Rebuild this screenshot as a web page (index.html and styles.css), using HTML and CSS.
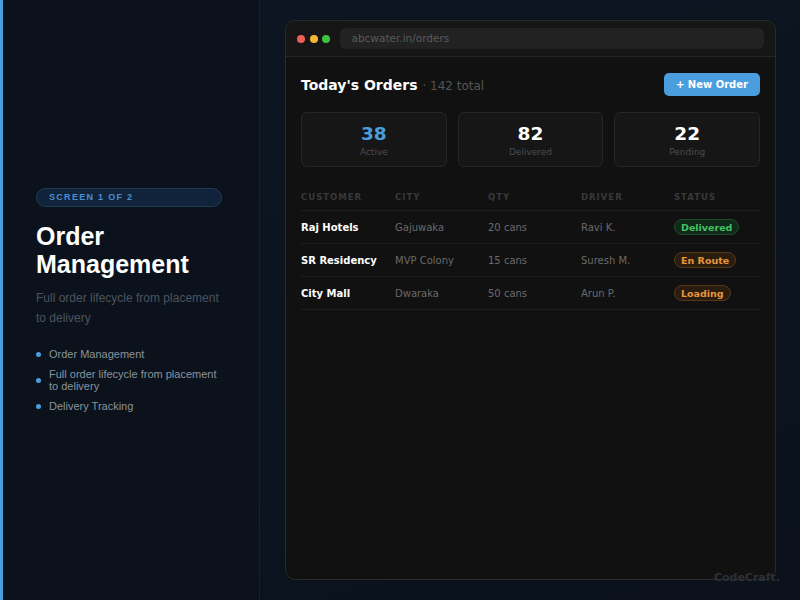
FILE: index.html
```html
<!DOCTYPE html>
<html lang="en">
<head>
  <meta charset="UTF-8" />
  <title>Order Management</title>
  <link rel="stylesheet" href="styles.css">
</head>
<body>
<div class="page">
  <aside class="side">
    <div class="pill">SCREEN 1 OF 2</div>
    <h1>Order Management</h1>
    <p class="lead">Full order lifecycle from placement to delivery</p>
    <ul class="points">
      <li>Order Management</li>
      <li>Full order lifecycle from placement to delivery</li>
      <li>Delivery Tracking</li>
    </ul>
  </aside>

  <main class="stage">
    <div class="window">
      <div class="titlebar">
        <span class="dot red"></span>
        <span class="dot yellow"></span>
        <span class="dot green"></span>
        <div class="url">abcwater.in/orders</div>
      </div>
      <div class="app">
        <div class="app-hdr">
          <div class="title">Today's Orders <span class="total">· 142 total</span></div>
          <button class="btn-new">+ New Order</button>
        </div>
        <div class="stats">
          <div class="stat"><div class="num blue">38</div><div class="lbl">Active</div></div>
          <div class="stat"><div class="num">82</div><div class="lbl">Delivered</div></div>
          <div class="stat"><div class="num">22</div><div class="lbl">Pending</div></div>
        </div>
        <div class="table">
          <div class="row head">
            <span>CUSTOMER</span><span>CITY</span><span>QTY</span><span>DRIVER</span><span>STATUS</span>
          </div>
          <div class="row">
            <span class="cust">Raj Hotels</span><span>Gajuwaka</span><span>20 cans</span><span>Ravi K.</span>
            <span><em class="badge ok">Delivered</em></span>
          </div>
          <div class="row">
            <span class="cust">SR Residency</span><span>MVP Colony</span><span>15 cans</span><span>Suresh M.</span>
            <span><em class="badge warn">En Route</em></span>
          </div>
          <div class="row">
            <span class="cust">City Mall</span><span>Dwaraka</span><span>50 cans</span><span>Arun P.</span>
            <span><em class="badge warn">Loading</em></span>
          </div>
        </div>
      </div>
    </div>
    <div class="mark">CodeCraft.</div>
  </main>
</div>
</body>
</html>
```

FILE: styles.css
```css
html,body{margin:0;height:100%}
body{background:#0c131d;font-family:"Liberation Sans",Arial,sans-serif;overflow:hidden}
.page{display:flex;height:600px}

.side{
  width:260px;flex:none;box-sizing:border-box;
  padding:188px 37px 0 33px;
  border-left:3px solid #4a9ede;
  border-right:1px solid #18202b;
  background:#0b121b;
}
.pill{
  border:1px solid #1f3a57;background:#10233a;border-radius:10px;
  color:#4a8fd0;font-size:9px;font-weight:bold;letter-spacing:1.3px;
  padding:5px 12px;line-height:7px;
}
.side h1{color:#fff;font-size:25px;line-height:28px;margin:15px 0 10px}
.lead{color:#4b535f;font-size:12px;line-height:20px;margin:0 0 20px}
.points{list-style:none;margin:0;padding:0}
.points li{position:relative;padding-left:13px;color:#8a939e;font-size:11px;line-height:12px;margin-bottom:8px}
.points li::before{content:"";position:absolute;left:0;top:50%;margin-top:-2px;width:5px;height:5px;border-radius:50%;background:#4a9ede}

.stage{flex:1;position:relative;padding:20px 24px 20px 25px;background:linear-gradient(160deg,#0c1521 0%,#0b121c 100%)}
.window{
  height:100%;box-sizing:border-box;
  background:#111111;border:1px solid #2a2a2a;border-radius:10px;overflow:hidden;
  font-family:"DejaVu Sans",sans-serif;
}
.titlebar{display:flex;align-items:center;gap:4.5px;height:35px;padding:0 11px;border-bottom:1px solid #252525;background:#161616}
.dot{width:8px;height:8px;border-radius:50%}
.red{background:#ee5f57}.yellow{background:#f3b833}.green{background:#3ec23f}
.url{flex:1;margin-left:5px;height:21px;background:#222;border-radius:6px;color:#5a5a5a;font-size:10.5px;line-height:21px;padding-left:12px}

.app{padding:16px 15px}
.app-hdr{display:flex;justify-content:space-between;align-items:center}
.title{color:#fff;font-weight:bold;font-size:14px}
.total{color:#555;font-weight:normal;font-size:12px}
.btn-new{background:#4a9ede;color:#fff;border:none;border-radius:5px;font-family:inherit;font-weight:bold;font-size:10px;height:23px;padding:0 12px}

.stats{display:grid;grid-template-columns:repeat(3,1fr);gap:11px;margin-top:16px}
.stat{background:#161616;border:1px solid #262626;border-radius:6px;height:55px;text-align:center;box-sizing:border-box;padding-top:10px}
.num{color:#fff;font-weight:bold;font-size:18.5px;line-height:21px}
.num.blue{color:#4a9ede}
.lbl{color:#4c4c4c;font-size:9px;margin-top:3px}

.table{margin-top:22px}
.row{display:grid;grid-template-columns:94px 93px 93px 93px 1fr;height:33px;box-sizing:border-box;align-items:center;border-bottom:1px solid #1d1d1d;font-size:10px;color:#6a6a6a}
.row.head{height:22px;align-items:start;color:#393939;font-weight:bold;font-size:8.5px;letter-spacing:1px;padding-top:3px}
.cust{color:#fff;font-weight:bold}
.badge{font-style:normal;font-weight:bold;font-size:9.5px;border-radius:8px;padding:1.5px 6px;display:inline-block;line-height:11px}
.badge.ok{color:#41c363;background:#10291a;border:1px solid #1c4d2b}
.badge.warn{color:#e8953c;background:#2a1d10;border:1px solid #553817}

.mark{position:absolute;right:20px;bottom:16px;color:#2b3038;font-family:"DejaVu Sans",sans-serif;font-weight:bold;font-size:11px}
```
